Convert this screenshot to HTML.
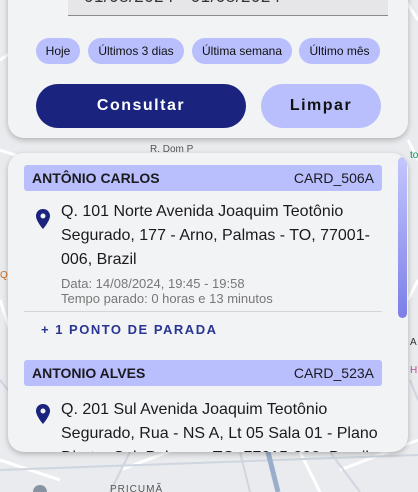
<!DOCTYPE html>
<html><head><meta charset="utf-8"><style>
*{margin:0;padding:0;box-sizing:border-box}
body{width:418px;height:492px;overflow:hidden;background:#e9ebee;font-family:"Liberation Sans",Roboto,sans-serif;position:relative;color:#1b1b1f}
.map{position:absolute;inset:0}
.panel{position:absolute;left:8px;top:-20px;width:400px;height:158px;background:#f2f3f5;border-radius:16px;box-shadow:0 2px 6px rgba(0,0,0,.25)}
.input{position:absolute;left:68px;top:0;width:320px;height:16px;background:#e6e6e8;border-bottom:1px solid #8a8a8e;overflow:hidden}
.input span{position:absolute;left:16px;top:-13px;font-size:17px;color:#333;letter-spacing:.5px}
.chip{position:absolute;top:38px;height:26px;background:#b9befd;border-radius:13px;font-size:12px;line-height:26px;text-align:center;color:#111}
.btn{position:absolute;top:84px;height:44px;border-radius:22px;font-size:16px;font-weight:bold;letter-spacing:1.5px;line-height:44px;text-align:center}
.card{position:absolute;left:8px;top:153px;width:400px;height:299px;background:#f2f3f5;border-radius:16px;box-shadow:0 2px 6px rgba(0,0,0,.25);overflow:hidden}
.sb{position:absolute;left:390px;top:4px;width:9px;height:161px;border-radius:5px;background:linear-gradient(#c3c6fd,#7b7fe8)}
.hdr{position:absolute;left:16px;width:358px;height:26px;background:#b9befd;border-radius:3px;font-size:14px;line-height:26px}
.hdr b{position:absolute;left:8px}
.hdr span{position:absolute;right:8px}
.addr{position:absolute;left:53px;width:320px;font-size:16px;line-height:24px;color:#1b1b1f}
.pin{position:absolute;left:28px}
.meta{position:absolute;left:53px;font-size:13px;color:#777;line-height:15px}
</style></head><body>
<svg class="map" width="418" height="492" viewBox="0 0 418 492">
<g stroke="#fff" stroke-width="3" fill="none">
<path d="M0 60 L30 40 M0 150 L60 170 M0 300 L10 330 M405 0 L418 20 M408 140 L418 160 M408 300 L418 280 M0 460 L60 480 M120 470 L200 440 M300 452 L320 492 M340 470 L418 440"/>
</g>
<g stroke="#cfd6df" stroke-width="2" fill="none">
<path d="M0 470 L418 455 M130 452 L110 492 M240 452 L250 492 M330 452 L360 492 M0 380 L8 390 M410 380 L418 400"/>
</g>
<path d="M268 452 L278 492" stroke="#9aaecb" stroke-width="5"/>
<text x="150" y="152" font-size="10" fill="#555" font-family="Liberation Sans">R. Dom P</text>
<text x="110" y="492" font-size="10" fill="#555" font-family="Liberation Sans" letter-spacing="1">PRICUMÃ</text>
<text x="410" y="158" font-size="10" fill="#0a8a55" font-family="Liberation Sans">to</text>
<text x="410" y="345" font-size="10" fill="#333" font-family="Liberation Sans">A</text>
<text x="410" y="373" font-size="10" fill="#d0429a" font-family="Liberation Sans">H</text>
<text x="0" y="278" font-size="10" fill="#d06a20" font-family="Liberation Sans">Q</text>
<circle cx="40" cy="492" r="7" fill="#8793a0"/>
</svg>
<div class="panel"></div>
<div class="input"><span>01/08/2024 - 01/08/2024</span></div>
<div class="chip" style="left:36px;width:44px">Hoje</div>
<div class="chip" style="left:88px;width:96px">Últimos 3 dias</div>
<div class="chip" style="left:192px;width:100px">Última semana</div>
<div class="chip" style="left:299px;width:81px">Último mês</div>
<div class="btn" style="left:36px;width:210px;background:#1a237e;color:#fff">Consultar</div>
<div class="btn" style="left:261px;width:120px;background:#b9befd;color:#111">Limpar</div>
<div class="card">
<div class="sb"></div>
<div class="hdr" style="top:12px"><b>ANTÔNIO CARLOS</b><span>CARD_506A</span></div>
<svg class="pin" style="top:56px" width="14" height="20" viewBox="0 0 14 20"><path d="M7 0C3 0 0 3 0 7c0 5 7 13 7 13s7-8 7-13c0-4-3-7-7-7zm0 9.5a2.5 2.5 0 110-5 2.5 2.5 0 010 5z" fill="#1a237e"/></svg>
<div class="addr" style="top:47px">Q. 101 Norte Avenida Joaquim Teotônio Segurado, 177 - Arno, Palmas - TO, 77001-006, Brazil</div>
<div class="meta" style="top:123px">Data: 14/08/2024, 19:45 - 19:58<br>Tempo parado: 0 horas e 13 minutos</div>
<div style="position:absolute;left:16px;top:158px;width:358px;height:1px;background:#d5d5d8"></div>
<div style="position:absolute;left:33px;top:169px;font-size:13px;letter-spacing:1.5px;color:#283593;font-weight:bold">+ 1 PONTO DE PARADA</div>
<div class="hdr" style="top:207px"><b>ANTONIO ALVES</b><span>CARD_523A</span></div>
<svg class="pin" style="top:251px" width="14" height="20" viewBox="0 0 14 20"><path d="M7 0C3 0 0 3 0 7c0 5 7 13 7 13s7-8 7-13c0-4-3-7-7-7zm0 9.5a2.5 2.5 0 110-5 2.5 2.5 0 010 5z" fill="#1a237e"/></svg>
<div class="addr" style="top:245px">Q. 201 Sul Avenida Joaquim Teotônio Segurado, Rua - NS A, Lt 05 Sala 01 - Plano Diretor Sul, Palmas - TO, 77015-202, Brazil</div>
</div>
</body></html>
